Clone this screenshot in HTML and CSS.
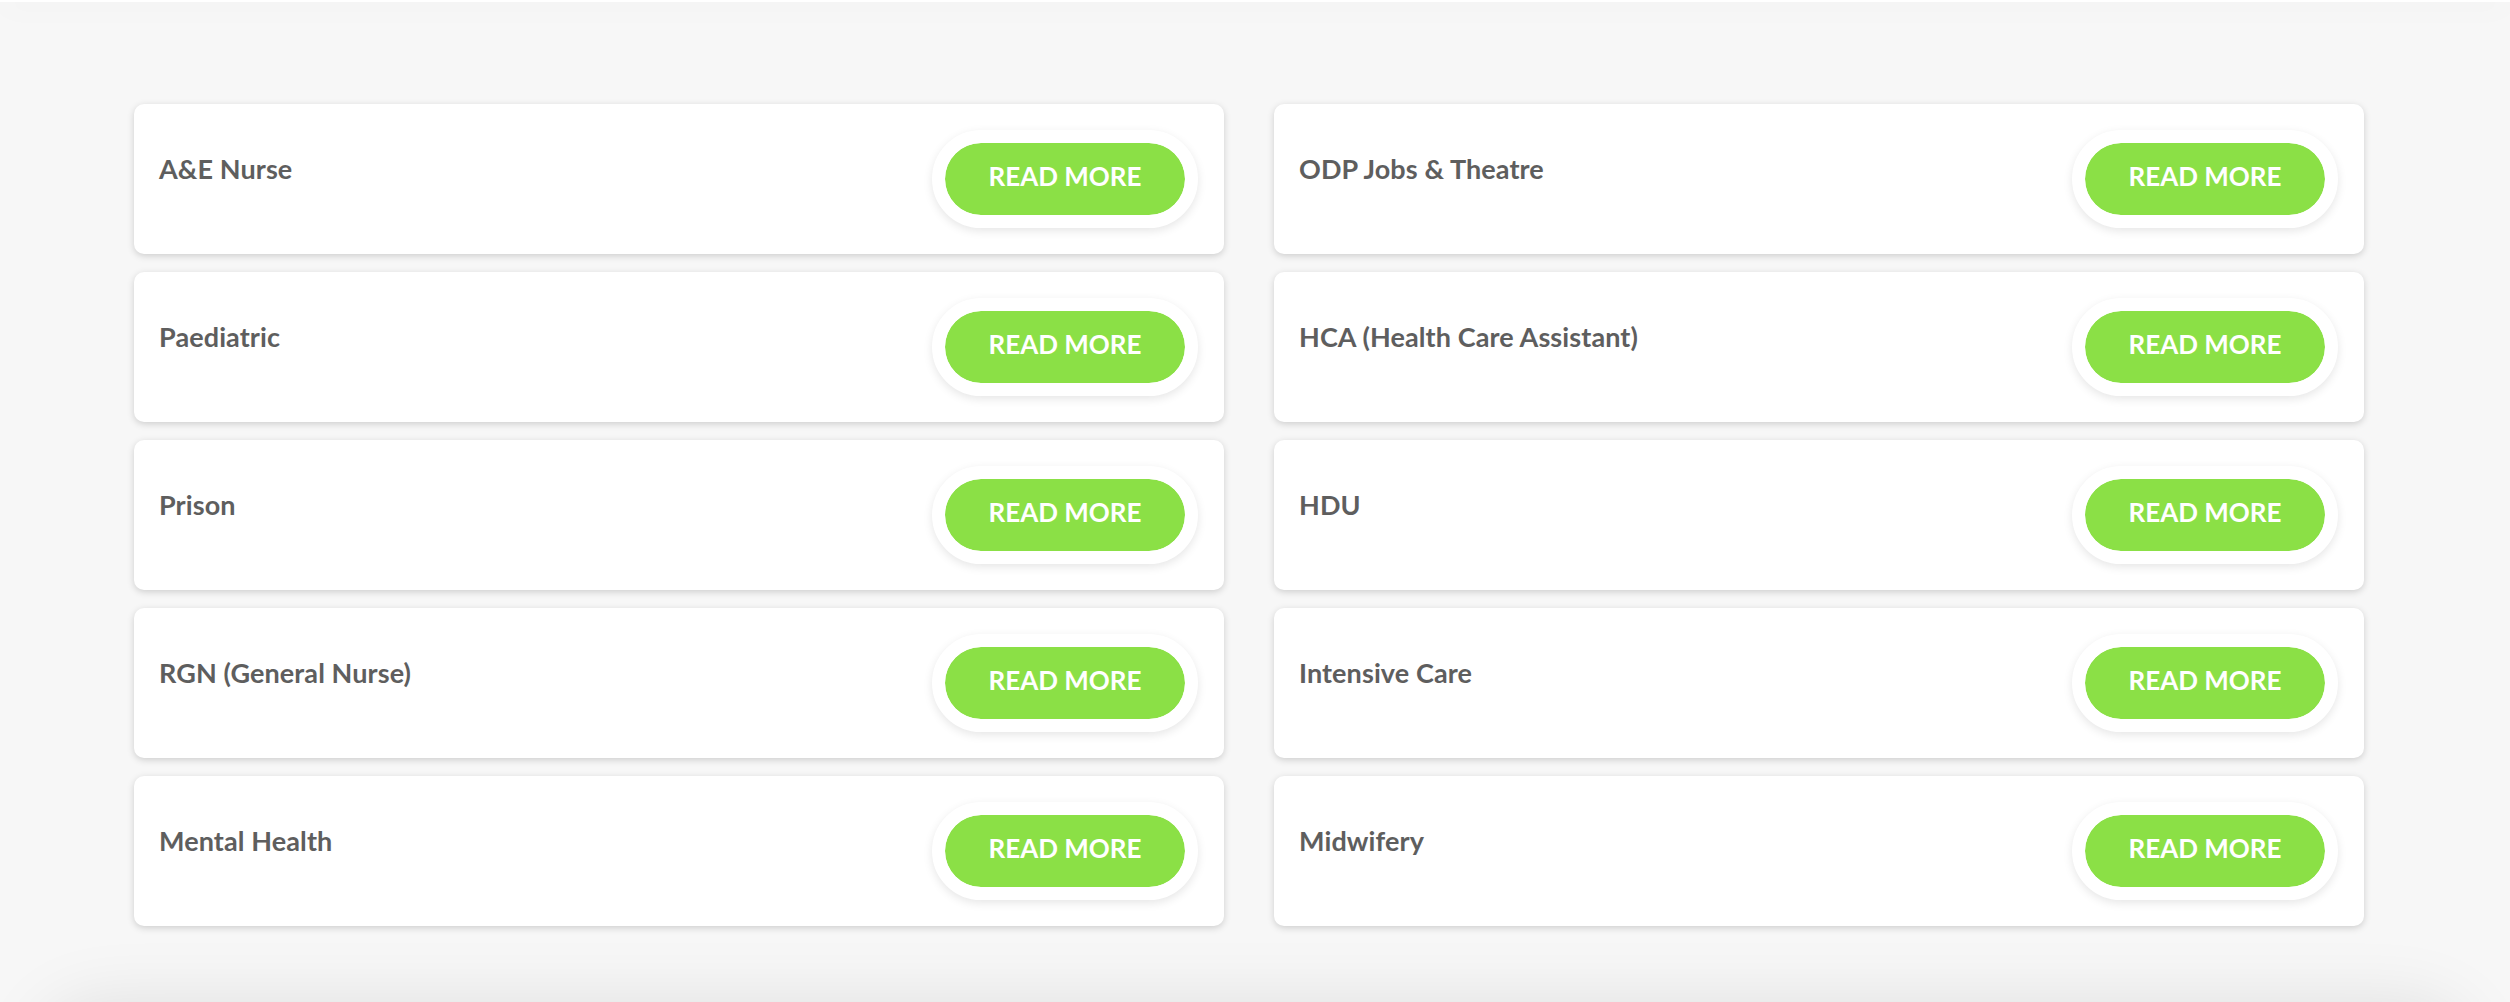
FILE: index.html
```html
<!DOCTYPE html>
<html lang="en">
<head>
<meta charset="utf-8">
<title>Jobs</title>
<link rel="stylesheet" href="styles.css">
</head>
<body>
<header class="topbar"></header>
<main class="page">
  <section class="grid">
    <div class="card"><h3 class="title">A&amp;E Nurse</h3><a class="btn" href="#">READ MORE</a></div>
    <div class="card"><h3 class="title">ODP Jobs &amp; Theatre</h3><a class="btn" href="#">READ MORE</a></div>
    <div class="card"><h3 class="title">Paediatric</h3><a class="btn" href="#">READ MORE</a></div>
    <div class="card"><h3 class="title">HCA (Health Care Assistant)</h3><a class="btn" href="#">READ MORE</a></div>
    <div class="card"><h3 class="title">Prison</h3><a class="btn" href="#">READ MORE</a></div>
    <div class="card"><h3 class="title">HDU</h3><a class="btn" href="#">READ MORE</a></div>
    <div class="card"><h3 class="title">RGN (General Nurse)</h3><a class="btn" href="#">READ MORE</a></div>
    <div class="card"><h3 class="title">Intensive Care</h3><a class="btn" href="#">READ MORE</a></div>
    <div class="card"><h3 class="title">Mental Health</h3><a class="btn" href="#">READ MORE</a></div>
    <div class="card"><h3 class="title">Midwifery</h3><a class="btn" href="#">READ MORE</a></div>
  </section>
  <footer class="below"></footer>
</main>
</body>
</html>
```

FILE: styles.css
```css
html, body {
  margin: 0;
  padding: 0;
}
body {
  background: #f7f7f7;
  font-family: "Lato", "Liberation Sans", sans-serif;
  overflow: hidden;
}
.topbar {
  height: 2px;
  background: #fff;
  box-shadow: 0 2px 30px rgba(0, 0, 0, 0.16);
  position: relative;
  z-index: 2;
}
.page {
  padding: 102px 0 0 134px;
}
.grid {
  display: grid;
  grid-template-columns: 1090px 1090px;
  column-gap: 50px;
  row-gap: 18px;
}
.card {
  height: 150px;
  box-sizing: border-box;
  background: #fff;
  border-radius: 10px;
  box-shadow: 0 2px 7px rgba(0, 0, 0, 0.17);
  display: flex;
  align-items: center;
  justify-content: space-between;
  padding: 0 26px 0 25px;
}
.title {
  margin: 0 0 22px 0;
  font-size: 27px;
  font-weight: 700;
  color: #5e5e5e;
  letter-spacing: 0.1px;
}
.btn {
  display: flex;
  align-items: center;
  justify-content: center;
  box-sizing: content-box;
  width: 240px;
  height: 65px;
  padding-bottom: 7px;
  border: 13px solid #fff;
  border-radius: 50px;
  background: #8be046;
  background-clip: padding-box;
  box-shadow: 0 3px 10px rgba(0, 0, 0, 0.1);
  color: #fff;
  font-size: 26px;
  font-weight: 700;
  text-decoration: none;
}
.below {
  margin: 78px 40px 0 -94px;
  width: 2430px;
  height: 200px;
  background: #f7f7f7;
  border-radius: 60px;
  box-shadow: 0 0 70px rgba(0, 0, 0, 0.1);
}
```
